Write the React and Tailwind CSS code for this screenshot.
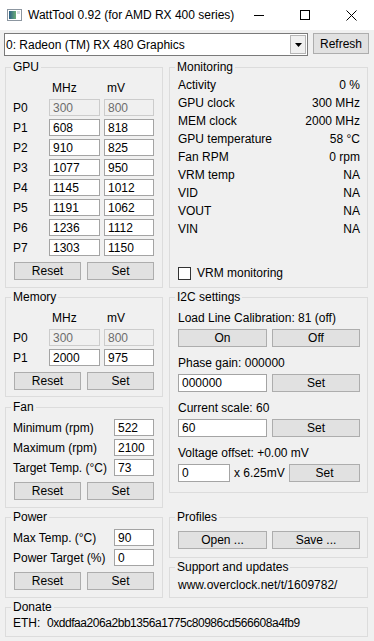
import React from "react";

const gpuStates = [
  ["P0", "300", "800", true],
  ["P1", "608", "818"],
  ["P2", "910", "825"],
  ["P3", "1077", "950"],
  ["P4", "1145", "1012"],
  ["P5", "1191", "1062"],
  ["P6", "1236", "1112"],
  ["P7", "1303", "1150"],
];

const monitoring = [
  ["Activity", "0 %"],
  ["GPU clock", "300 MHz"],
  ["MEM clock", "2000 MHz"],
  ["GPU temperature", "58 °C"],
  ["Fan RPM", "0 rpm"],
  ["VRM temp", "NA"],
  ["VID", "NA"],
  ["VOUT", "NA"],
  ["VIN", "NA"],
];

function Group({ title, className, children }) {
  return (
    <fieldset className={`border border-[#dcdcdc] ${className}`}>
      <legend className="ml-[5px] px-[2px] text-[12px] leading-[14px]">{title}</legend>
      {children}
    </fieldset>
  );
}

function Field({ value, disabled, className }) {
  return (
    <input
      readOnly
      value={value}
      className={`${className} h-[17px] border pl-[3px] text-[12px] leading-[15px] outline-none ${
        disabled
          ? "border-[#cccccc] bg-[#f0f0f0] text-[#6d6d6d]"
          : "border-[#a4a4a4] bg-white text-black"
      }`}
    />
  );
}

function Button({ children, className }) {
  return (
    <button className={`${className} h-[18px] border border-[#adadad] bg-[#e1e1e1] text-[12px] leading-[16px] text-black`}>
      {children}
    </button>
  );
}

function StateTable({ rows }) {
  return (
    <div className="flex flex-col pl-[7px] pt-[7px]">
      <div className="flex h-[14px] items-center leading-[14px]">
        <span className="w-[36px]" />
        <span className="w-[51px] pl-[3px]">MHz</span>
        <span className="ml-[4px] pl-[3px]">mV</span>
      </div>
      <div className="mt-[4px] flex flex-col gap-[3px]">
        {rows.map(([p, mhz, mv, off]) => (
          <div key={p} className="flex h-[17px] items-center">
            <span className="w-[36px]">{p}</span>
            <Field value={mhz} disabled={off} className="w-[51px]" />
            <Field value={mv} disabled={off} className="ml-[4px] w-[50px]" />
          </div>
        ))}
      </div>
      <div className="mt-[6px] flex pl-[1px]">
        <Button className="w-[67px]">Reset</Button>
        <Button className="ml-[6px] w-[67px]">Set</Button>
      </div>
    </div>
  );
}

function InputList({ rows }) {
  return (
    <div className="flex flex-col pl-[7px] pt-[5px]">
      <div className="flex flex-col gap-[3px]">
        {rows.map(([label, value]) => (
          <div key={label} className="flex h-[17px] items-center">
            <span className="w-[101px]">{label}</span>
            <Field value={value} className="w-[40px]" />
          </div>
        ))}
      </div>
      <div className="mt-[6px] flex pl-[1px]">
        <Button className="w-[67px]">Reset</Button>
        <Button className="ml-[6px] w-[67px]">Set</Button>
      </div>
    </div>
  );
}

function TitleBar() {
  return (
    <div className="flex h-[30px] items-center bg-white">
      <svg width="15" height="12" viewBox="0 0 15 12" className="ml-[7px]">
        <defs>
          <linearGradient id="ic" x1="0" y1="0" x2="1" y2="0">
            <stop offset="0" stopColor="#2d5f86" />
            <stop offset="1" stopColor="#6cae78" />
          </linearGradient>
        </defs>
        <rect x="0.5" y="0.5" width="14" height="11" fill="#ffffff" stroke="#8c96a0" />
        <rect x="2" y="2" width="7" height="8" fill="url(#ic)" />
        <rect x="10" y="2" width="3" height="3" fill="#d8dde2" />
      </svg>
      <span className="ml-[6px] text-[12px] leading-[16px]">WattTool 0.92 (for AMD RX 400 series)</span>
      <div className="ml-auto flex h-full">
        <div className="flex w-[46px] items-center justify-center">
          <svg width="10" height="10" viewBox="0 0 10 10">
            <path d="M0 5.5H10" stroke="#000" strokeWidth="1" />
          </svg>
        </div>
        <div className="flex w-[46px] items-center justify-center">
          <svg width="10" height="10" viewBox="0 0 10 10">
            <rect x="0.5" y="0.5" width="9" height="9" fill="none" stroke="#000" strokeWidth="1" />
          </svg>
        </div>
        <div className="flex w-[46px] items-center justify-center">
          <svg width="11" height="11" viewBox="0 0 11 11">
            <path d="M0.5 0.5L10.5 10.5M10.5 0.5L0.5 10.5" stroke="#000" strokeWidth="1" />
          </svg>
        </div>
      </div>
    </div>
  );
}

export default function App() {
  return (
    <div className="h-[641px] w-[374px] overflow-hidden bg-[#f0f0f0] font-['Liberation_Sans',Arial,sans-serif] text-[12px] leading-[14px] text-black">
      <TitleBar />

      <div className="ml-[4px] mt-[3px] flex items-start">
        <div className="flex h-[23px] w-[304px] items-center border border-[#7a7a7a] bg-white">
          <span className="flex-1 pl-[1px]">0: Radeon (TM) RX 480 Graphics</span>
          <div className="mr-[1px] flex h-[19px] w-[16px] items-center justify-center border border-[#b5b5b5] bg-[#f0f0f0]">
            <svg width="7" height="4" viewBox="0 0 7 4">
              <path d="M0 0H7L3.5 4Z" fill="#000" />
            </svg>
          </div>
        </div>
        <Button className="ml-[5px] !h-[21px] w-[56px]">Refresh</Button>
      </div>

      <div className="mt-[4px] flex gap-[6px] px-[5px]">
        <div className="flex w-[158px] flex-col">
          <Group title="GPU" className="h-[228px]">
            <StateTable rows={gpuStates} />
          </Group>
          <Group title="Memory" className="mt-[2px] h-[107px]">
            <StateTable rows={[["P0", "300", "800", true], ["P1", "2000", "975"]]} />
          </Group>
          <Group title="Fan" className="mt-[3px] h-[108px]">
            <InputList
              rows={[
                ["Minimum (rpm)", "522"],
                ["Maximum (rpm)", "2100"],
                ["Target Temp. (°C)", "73"],
              ]}
            />
          </Group>
          <Group title="Power" className="mt-[2px] h-[88px]">
            <InputList
              rows={[
                ["Max Temp. (°C)", "90"],
                ["Power Target (%)", "0"],
              ]}
            />
          </Group>
        </div>

        <div className="flex w-[199px] flex-col">
          <Group title="Monitoring" className="h-[228px]">
            <div className="flex flex-col pl-[8px] pr-[7px] pt-[2px]">
              {monitoring.map(([k, v]) => (
                <div key={k} className="flex h-[18px] items-center justify-between">
                  <span>{k}</span>
                  <span>{v}</span>
                </div>
              ))}
              <div className="mt-[26px] flex h-[18px] items-center">
                <span className="h-[13px] w-[13px] border border-[#333333] bg-white" />
                <span className="ml-[6px]">VRM monitoring</span>
              </div>
            </div>
          </Group>

          <Group title="I2C settings" className="mt-[2px] h-[203px]">
            <div className="flex flex-col pl-[8px]">
              <span className="mt-[7px] h-[14px]">Load Line Calibration: 81 (off)</span>
              <div className="mt-[4px] flex">
                <Button className="w-[89px]">On</Button>
                <Button className="ml-[5px] w-[88px]">Off</Button>
              </div>
              <span className="mt-[9px] h-[14px]">Phase gain: 000000</span>
              <div className="mt-[4px] flex">
                <Field value="000000" className="!h-[18px] w-[89px]" />
                <Button className="ml-[5px] w-[88px]">Set</Button>
              </div>
              <span className="mt-[9px] h-[14px]">Current scale: 60</span>
              <div className="mt-[4px] flex">
                <Field value="60" className="!h-[18px] w-[89px]" />
                <Button className="ml-[5px] w-[88px]">Set</Button>
              </div>
              <span className="mt-[9px] h-[14px]">Voltage offset: +0.00 mV</span>
              <div className="mt-[4px] flex items-center">
                <Field value="0" className="!h-[18px] w-[52px]" />
                <span className="w-[56px] pl-[4px]">x 6.25mV</span>
                <Button className="ml-[3px] w-[71px]">Set</Button>
              </div>
            </div>
          </Group>

          <Group title="Profiles" className="mt-[17px] h-[48px]">
            <div className="flex pl-[8px] pt-[7px]">
              <Button className="w-[89px]">Open ...</Button>
              <Button className="ml-[5px] w-[88px]">Save ...</Button>
            </div>
          </Group>

          <Group title="Support and updates" className="mt-[2px] h-[38px]">
            <div className="pl-[8px] pt-[4px]">www.overclock.net/t/1609782/</div>
          </Group>
        </div>
      </div>

      <Group title="Donate" className="ml-[5px] mt-[2px] h-[37px] w-[363px]">
        <div className="flex pl-[7px] pt-[2px]">
          <span className="w-[34px]">ETH:</span>
          <span className="tracking-[-0.45px]">0xddfaa206a2bb1356a1775c80986cd566608a4fb9</span>
        </div>
      </Group>
    </div>
  );
}
